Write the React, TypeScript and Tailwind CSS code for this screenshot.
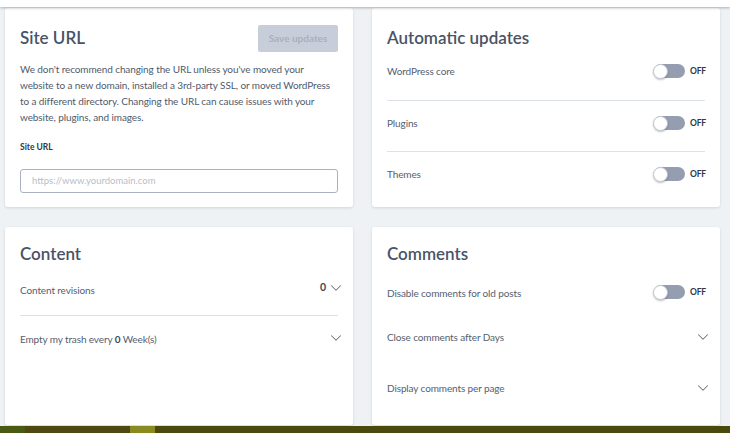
import { ChevronDown } from 'lucide-react'

const Toggle = () => (
  <div className="flex items-center gap-[5px]">
    <div className="relative h-[14px] w-[31px] rounded-full bg-[#959db0]">
      <div className="absolute -top-[0.5px] -left-[1px] h-[15px] w-[15px] rounded-full border border-[#c3c8d2] bg-white shadow-[0_1px_2px_rgba(0,0,0,0.25)]" />
    </div>
    <span className="w-[15px] text-[8.5px] font-bold tracking-[-0.2px] text-[#2d3748]">OFF</span>
  </div>
)

const Chevron = () => (
  <ChevronDown size={18} strokeWidth={1.4} className="-mr-[7px] -ml-[4px] text-[#6b7385]" />
)

const Divider = () => <div className="h-px bg-[#dde2ea]" />

const cardCls =
  'rounded-[3px] bg-white shadow-[0_1px_3px_rgba(0,0,0,0.12)]'

const rowCls =
  'flex h-[28px] items-center justify-between text-[10px] tracking-[-0.12px]'

export default function App() {
  return (
    <div className="flex h-[433px] w-[730px] flex-col overflow-hidden bg-[#eff2f5] font-['Lato',sans-serif] text-[#56606f]">
      <div className="relative z-10 h-[7px] shrink-0 bg-white shadow-[0_1px_3px_rgba(0,0,0,0.28)]" />

      <div className="mt-px grid grid-cols-[348px_348px] gap-x-[19px] gap-y-[20px] pl-[5px]">
        {/* Site URL */}
        <div className={`${cardCls} h-[199px] px-[15px] pt-[16px]`}>
          <div className="flex h-[28px] items-center justify-between">
            <h2 className="text-[17px] leading-6 font-semibold text-[#4a5366]">Site URL</h2>
            <button className="h-[27px] w-[80px] rounded-[2px] bg-[#c8ced9] text-[10px] font-bold text-[#a8b0be]">
              Save updates
            </button>
          </div>
          <p className="mt-[9px] text-[10px] leading-[16px] tracking-[-0.1px] whitespace-nowrap text-[#505a6b]">
            We don't recommend changing the URL unless you've moved your
            <br />
            website to a new domain, installed a 3rd-party SSL, or moved WordPress
            <br />
            to a different directory. Changing the URL can cause issues with your
            <br />
            website, plugins, and images.
          </p>
          <div className="mt-[16px] text-[8.5px] leading-[12px] font-bold text-[#2d3748]">Site URL</div>
          <div className="mt-[16px] flex h-[24px] items-center rounded-[3px] border border-[#a9b2c3] px-[11px] text-[9.5px] text-[#b7bec9]">
            https://www.yourdomain.com
          </div>
        </div>

        {/* Automatic updates */}
        <div className={`${cardCls} h-[199px] px-[15px] pt-[16px]`}>
          <h2 className="flex h-[28px] items-center text-[17px] font-semibold text-[#4a5366]">
            Automatic updates
          </h2>
          <div className={`mt-[5px] ${rowCls}`}>
            <span>WordPress core</span>
            <Toggle />
          </div>
          <div className="mt-[15px]">
            <Divider />
          </div>
          <div className={`mt-[8px] ${rowCls}`}>
            <span>Plugins</span>
            <Toggle />
          </div>
          <div className="mt-[14px]">
            <Divider />
          </div>
          <div className={`mt-[8px] ${rowCls}`}>
            <span>Themes</span>
            <Toggle />
          </div>
        </div>

        {/* Content */}
        <div className={`${cardCls} h-[198px] px-[15px] pt-[15px]`}>
          <h2 className="flex h-[24px] items-center text-[17px] font-semibold text-[#4a5366]">Content</h2>
          <div className={`mt-[10px] ${rowCls}`}>
            <span>Content revisions</span>
            <span className="-mt-[4px] flex items-center gap-[5px]">
              <b className="text-[10.5px] text-[#3d4656]">0</b>
              <Chevron />
            </span>
          </div>
          <div className="mt-[11px]">
            <Divider />
          </div>
          <div className={`mt-[9px] ${rowCls}`}>
            <span>
              Empty my trash every <b className="text-[#3d4656]">0</b> Week(s)
            </span>
            <span className="-mt-[3px] flex">
              <Chevron />
            </span>
          </div>
        </div>

        {/* Comments */}
        <div className={`${cardCls} h-[198px] px-[15px] pt-[15px]`}>
          <h2 className="flex h-[24px] items-center text-[17px] font-semibold text-[#4a5366]">Comments</h2>
          <div className={`mt-[12px] ${rowCls}`}>
            <span className="mt-[3px]">Disable comments for old posts</span>
            <Toggle />
          </div>
          <div className={`mt-[17px] ${rowCls}`}>
            <span>Close comments after Days</span>
            <Chevron />
          </div>
          <div className={`mt-[23px] ${rowCls}`}>
            <span>Display comments per page</span>
            <Chevron />
          </div>
        </div>
      </div>

      <div className="mt-auto flex h-[7px] shrink-0">
        <div className="w-[25px] bg-[#4b5a12]" />
        <div className="w-[105px] bg-[#4e4812]" />
        <div className="w-[25px] bg-[#8a8b1f]" />
        <div className="flex-1 bg-[#4a4a0e]" />
      </div>
    </div>
  )
}
